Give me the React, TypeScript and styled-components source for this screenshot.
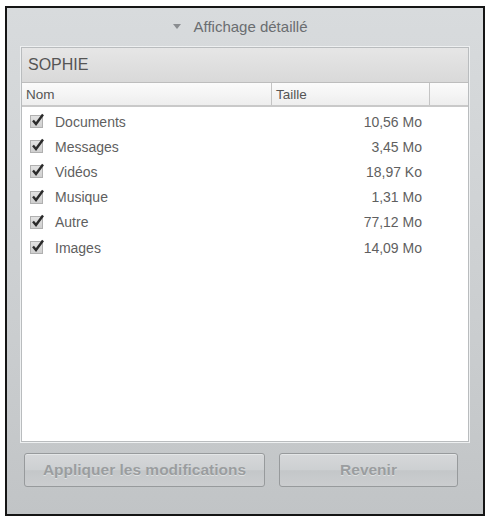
import styled, { createGlobalStyle } from "styled-components";

const Global = createGlobalStyle`
  html, body {
    margin: 0;
    padding: 0;
    background: #ffffff;
    font-family: "Liberation Sans", Arial, sans-serif;
  }
`;

const Frame = styled.div`
  margin: 6px 0 0 5px;
  width: 476px;
  height: 506px;
  border: 2px solid #151515;
  background: linear-gradient(#d8dbdd, #c9ccce 70%, #c1c4c6);
  display: flex;
  flex-direction: column;
`;

const Title = styled.div`
  height: 36px;
  padding-bottom: 3px;
  display: flex;
  align-items: center;
  justify-content: center;
  gap: 13px;
  font-size: 15px;
  color: #6a6d70;
  padding-right: 10px;
`;

const Arrow = styled.span`
  width: 0;
  height: 0;
  border-left: 4px solid transparent;
  border-right: 4px solid transparent;
  border-top: 5px solid #8a8d90;
  margin-top: 1px;
`;

const Panel = styled.div`
  margin: 0 14px;
  height: 393px;
  background: #ffffff;
  border: 1px solid #b9bcbe;
  box-shadow: 0 0 0 1px #eef0f1;
  display: flex;
  flex-direction: column;
`;

const PanelHead = styled.div`
  height: 34px;
  display: flex;
  align-items: center;
  padding-left: 6px;
  font-size: 16px;
  color: #555;
  background: linear-gradient(#e6e6e6, #d9d9d9);
  border-bottom: 1px solid #bdbdbd;
`;

const ColHead = styled.div`
  height: 22px;
  display: grid;
  grid-template-columns: 250px 158px 1fr;
  background: linear-gradient(#fbfbfb, #eeeeee);
  border-bottom: 2px solid #c9c9c9;
  font-size: 13.5px;
  color: #555;
`;

const ColCell = styled.div<{ $last?: boolean }>`
  display: flex;
  align-items: center;
  padding-left: 4px;
  border-right: ${(p) => (p.$last ? "none" : "1px solid #c4c4c4")};
`;

const Rows = styled.div`
  padding-top: 2px;
`;

const Row = styled.div`
  height: 25.2px;
  display: grid;
  grid-template-columns: 1fr auto;
  align-items: center;
  padding: 0 46px 0 8px;
  font-size: 14px;
  color: #5f5f5f;
`;

const Name = styled.div`
  display: flex;
  align-items: center;
  gap: 12px;
`;

const Check = styled.span`
  width: 11px;
  height: 11px;
  border: 1px solid #b0b0b0;
  background: linear-gradient(#e2e2e2, #cfcfcf);
  position: relative;
  display: inline-block;
  svg {
    position: absolute;
    left: 0px;
    top: -3px;
  }
`;

const Buttons = styled.div`
  display: flex;
  gap: 14px;
  margin: 11px 0 0 17px;
`;

const Button = styled.button<{ $w: number }>`
  width: ${(p) => p.$w}px;
  height: 34px;
  padding: 0;
  border: 1px solid #979a9c;
  border-radius: 3px;
  background: linear-gradient(#d6d8da, #cdd0d2 50%, #c4c7c9 52%, #cbcdcf);
  box-shadow: inset 0 1px 0 #e4e6e7;
  font-family: "Liberation Sans", Arial, sans-serif;
  font-weight: bold;
  font-size: 15.5px;
  color: #9a9d9f;
  text-shadow: 0 1px 0 #dfe1e2;
`;

const items = [
  ["Documents", "10,56 Mo"],
  ["Messages", "3,45 Mo"],
  ["Vidéos", "18,97 Ko"],
  ["Musique", "1,31 Mo"],
  ["Autre", "77,12 Mo"],
  ["Images", "14,09 Mo"],
];

export default function App() {
  return (
    <>
      <Global />
      <Frame>
        <Title>
          <Arrow />
          Affichage détaillé
        </Title>
        <Panel>
          <PanelHead>SOPHIE</PanelHead>
          <ColHead>
            <ColCell>Nom</ColCell>
            <ColCell>Taille</ColCell>
            <ColCell $last />
          </ColHead>
          <Rows>
            {items.map(([n, s]) => (
              <Row key={n}>
                <Name>
                  <Check>
                    <svg width="14" height="14" viewBox="0 0 14 14">
                      <path d="M2 7.5 L5 11 L12 1.5" fill="none" stroke="#2a2a2a" strokeWidth="2.4" />
                    </svg>
                  </Check>
                  {n}
                </Name>
                <div>{s}</div>
              </Row>
            ))}
          </Rows>
        </Panel>
        <Buttons>
          <Button $w={241}>Appliquer les modifications</Button>
          <Button $w={179}>Revenir</Button>
        </Buttons>
      </Frame>
    </>
  );
}
